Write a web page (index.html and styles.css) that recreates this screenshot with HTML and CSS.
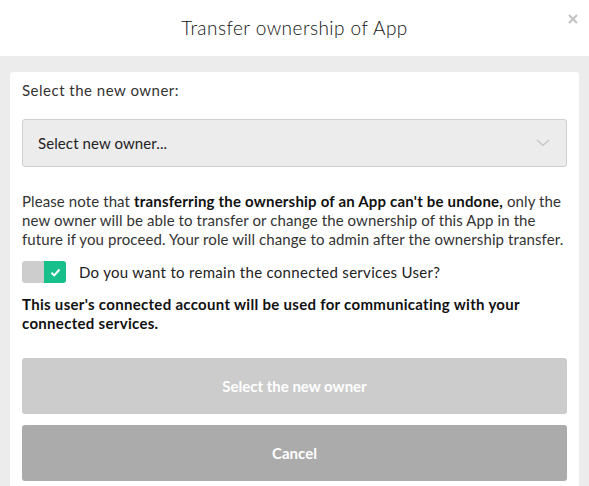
FILE: index.html
```html
<!DOCTYPE html>
<html>
<head>
<meta charset="utf-8">
<link rel="stylesheet" href="styles.css">
</head>
<body>
<div class="modal">
  <header class="modal-header">
    <h1 class="title">Transfer ownership of App</h1>
    <button class="close" aria-label="Close">
      <svg width="10" height="10" viewBox="0 0 10 10"><path d="M1 1L9 9M9 1L1 9" stroke="#c4c4c4" stroke-width="2.2" stroke-linecap="butt"/></svg>
    </button>
  </header>
  <div class="modal-body">
    <div class="card">
      <p class="label">Select the new owner:</p>
      <div class="select">
        <span>Select new owner...</span>
        <svg class="chev" width="14" height="8" viewBox="0 0 14 8"><path d="M1 1l6 5.5L13 1" fill="none" stroke="#c2c2c2" stroke-width="1.2"/></svg>
      </div>
      <p class="note">Please note that <b>transferring the ownership of an App can't be undone,</b> only the new owner will be able to transfer or change the ownership of this App in the future if you proceed. Your role will change to admin after the ownership transfer.</p>
      <div class="toggle-row">
        <div class="toggle">
          <span class="off"></span>
          <span class="on"><svg width="11" height="9" viewBox="0 0 11 9"><path d="M1.5 4.8l2.8 2.6L9.5 1.5" fill="none" stroke="#fff" stroke-width="2"/></svg></span>
        </div>
        <span class="toggle-label">Do you want to remain the connected services User?</span>
      </div>
      <p class="warn">This user's connected account will be used for communicating with your connected services.</p>
      <button class="btn btn-primary">Select the new owner</button>
      <button class="btn btn-cancel">Cancel</button>
    </div>
  </div>
</div>
</body>
</html>
```
FILE: styles.css
```css
* { box-sizing: border-box; }
html, body { margin: 0; padding: 0; }
body {
  font-family: Lato, "Noto Sans", sans-serif;
  color: #222;
  background: #ececec;
  width: 589px;
  height: 486px;
  overflow: hidden;
}
.modal { display: flex; flex-direction: column; }
.modal-header {
  height: 56px;
  background: #fff;
  display: flex;
  align-items: center;
  justify-content: center;
  position: relative;
}
.title {
  margin: 0;
  font-size: 19px;
  font-weight: 300;
  color: #111;
  letter-spacing: 0.45px;
  padding-bottom: 2px;
}
.close {
  position: absolute;
  right: 11px;
  top: 14px;
  background: none;
  border: none;
  padding: 0;
  width: 10px;
  height: 10px;
  display: flex;
}
.modal-body { padding: 16px 10px 0; }
.card {
  background: #fff;
  border-radius: 3px;
  padding: 9px 12px 20px;
  display: flex;
  flex-direction: column;
}
.label {
  margin: 0;
  font-size: 15px;
  line-height: 19px;
  color: #333;
  letter-spacing: 0.5px;
}
.select {
  margin-top: 19px;
  height: 48px;
  background: #ececec;
  border: 1px solid #cfcfcf;
  border-radius: 3px;
  display: flex;
  align-items: center;
  justify-content: space-between;
  padding: 0 16px 0 15px;
  font-size: 15px;
  color: #222;
  letter-spacing: 0.1px;
}
.note {
  margin: 25px 0 0;
  font-size: 15px;
  line-height: 19px;
  color: #333;
  letter-spacing: 0.1px;
}
.note b { font-weight: 700; color: #111; letter-spacing: 0.2px; }
.toggle-row {
  margin-top: 12px;
  display: flex;
  align-items: center;
  gap: 13px;
}
.toggle {
  width: 44px;
  height: 22px;
  border-radius: 3px;
  overflow: hidden;
  display: flex;
}
.toggle .off { flex: 1; background: #cdcdcd; }
.toggle .on {
  flex: 1;
  background: #17c08a;
  display: flex;
  align-items: center;
  justify-content: center;
}
.toggle-label { font-size: 15px; color: #222; letter-spacing: 0.3px; }
.warn {
  margin: 12px 0 0;
  font-size: 15px;
  line-height: 19px;
  font-weight: 700;
  color: #111;
  letter-spacing: 0.3px;
}
.btn {
  border: none;
  border-radius: 3px;
  height: 56px;
  width: 100%;
  font-family: inherit;
  font-size: 15px;
  font-weight: 700;
  color: #fff;
}
.btn-primary { margin-top: 25px; background: #cccccc; }
.btn-cancel { margin-top: 11px; background: #ababab; }
```
